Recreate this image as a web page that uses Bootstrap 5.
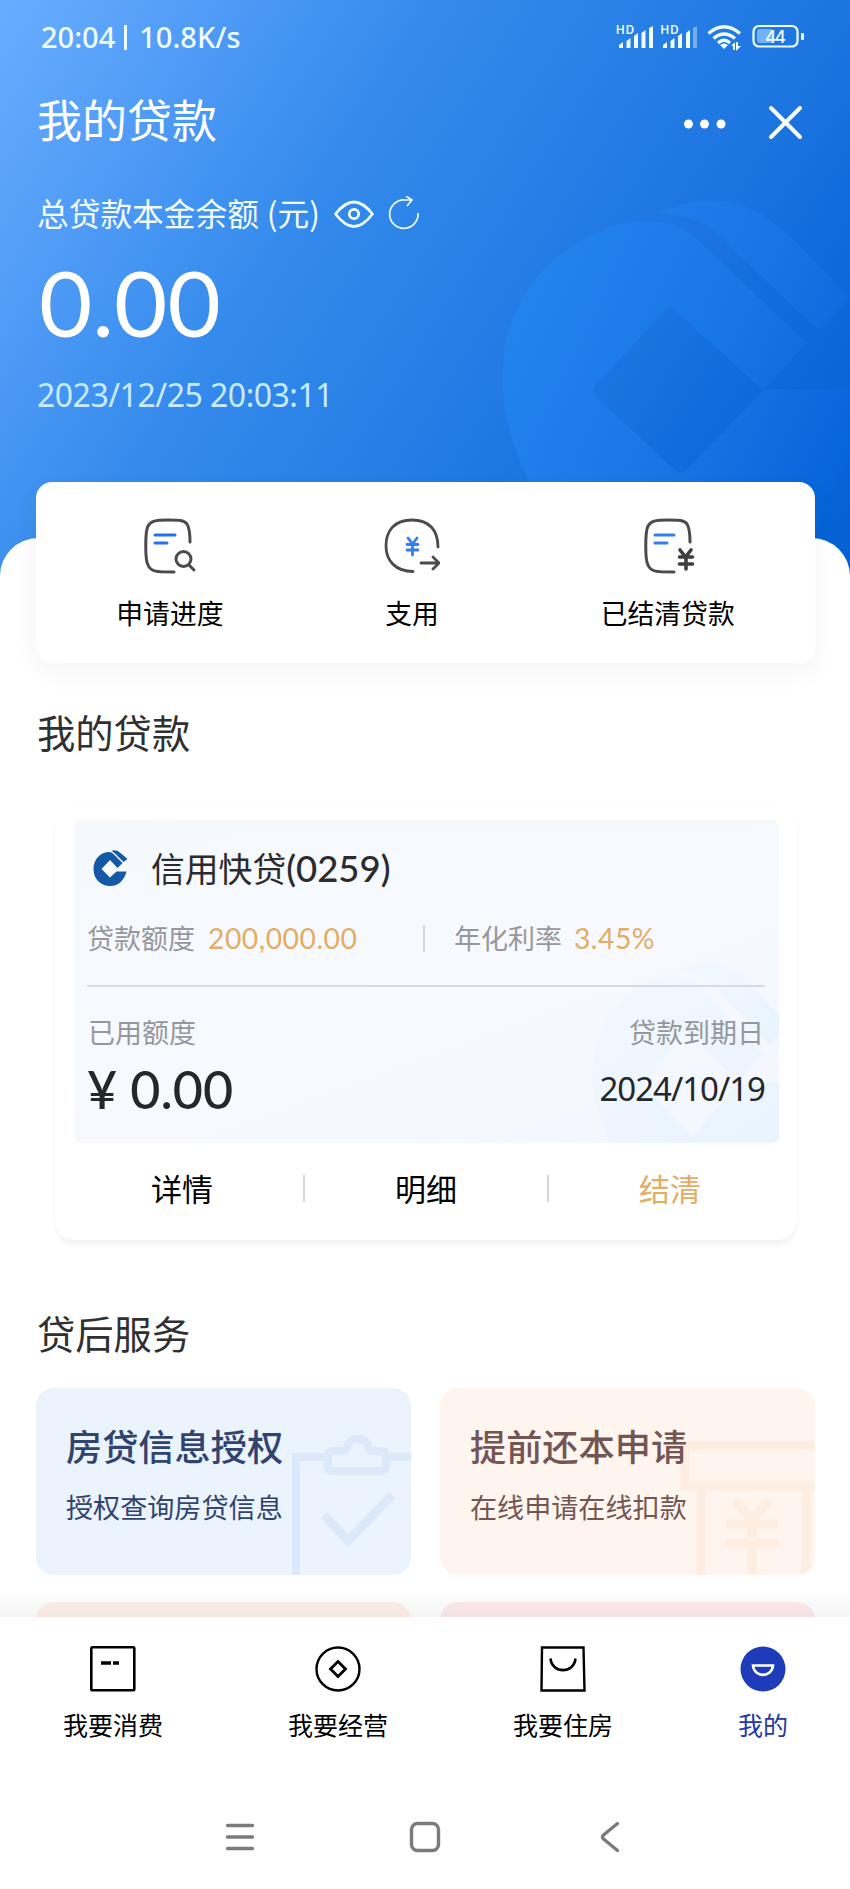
<!DOCTYPE html>
<html lang="zh-CN">
<head>
<meta charset="utf-8">
<meta name="viewport" content="width=device-width, initial-scale=1">
<title>我的贷款</title>
<link href="https://cdn.jsdelivr.net/npm/bootstrap@5.3.0/dist/css/bootstrap.min.css" rel="stylesheet">
<style>
body{margin:0;background:#fff;font-family:"Noto Sans CJK SC",sans-serif;color:#2b2b2d}
.screen{width:850px;height:1889px;overflow:hidden}
svg{display:block;flex:none}
.num{font-family:Lato,"Noto Sans CJK SC",sans-serif}
.dig{font-family:"Noto Sans","Noto Sans CJK SC",sans-serif}
.hero{height:598px;padding:0 36px 0 37px;background:linear-gradient(123deg,#68aeff 0%,#57a0f9 13%,#358bec 35%,#1c74e0 69%,#0c6ad9 82%,#0462d5 96%);color:#fff}
.hero>*{position:relative}
.hero .watermark{position:absolute;left:425px;top:180px}
.status{height:74px;padding:0 10px 0 4px;color:#eefcff}
.status-text{font-size:29px;font-weight:500}
.status-bar{width:3px;height:25px;background:#eefcff;margin:0 12px 0 9px}
.bar-title{height:94px;font-size:45px;padding-right:11px}
.bar-title span{padding-bottom:4px}
.bar-title svg{margin-top:3px}
.balance-label{height:92px;font-size:31.7px;color:#f2fbff}
.balance-label span{padding-bottom:2px}
.amount{height:90px;font-size:92px;line-height:84px;padding-left:2px}
.stamp{height:90px;font-size:32px;line-height:90px;color:#c9eaff;letter-spacing:-.5px}
.sheet{position:relative;margin-top:-60px;border-radius:38px 38px 0 0;background:#fff;padding:0 35px 0 36px}
.quick{height:181px;background:#fff;border-radius:16px;box-shadow:0 10px 28px rgba(0,0,0,.045);position:relative;top:-56px;margin-bottom:-57px;padding-top:36px;color:#000}
.quick-item{font-size:26.8px;line-height:40px}
.quick-item svg{margin-bottom:19px}
.sec{font-size:38.3px;line-height:50px;color:#303032;padding-left:1px}
.sec-loan{height:146px;padding-top:45px}
.sec-after{height:148px;padding-top:68px}
.loan{margin:0 18px 0 19px;height:432px;border-radius:20px;background:#fff;box-shadow:0 6px 4px rgba(0,0,0,.035),0 0 4px rgba(0,0,0,.02);padding:12px 18px 0 19px}
.loan-body{position:relative;height:323px;border-radius:7px;background:linear-gradient(160deg,#f5f9fe,#f7f9fe 50%,#f3f7fe);padding:0 14px 0 13px;overflow:hidden}
.loan-body>*{position:relative}
.loan-body .watermark{position:absolute;left:475px;top:130px}
.loan-name{height:96px;font-size:33.8px;padding-left:5px}
.loan-name span{margin-left:23px}
.loan-name .num{font-size:36.5px;font-weight:500}
.rate{height:44px;font-size:27px;color:#95979d}
.rate .num{font-size:28.3px;letter-spacing:.5px}
.gold{color:#e3ad65}
.vbar{width:1.5px;height:27px;background:#d6d8dc}
.rule{height:2px;background:#d8dbe1;margin-top:25px}
.used-label{height:46px;margin-top:22px;padding:0 1px;font-size:27px;color:#95979d}
.used{height:66px;margin-top:1px;color:#25272b}
.used-amt{font-size:52px;font-weight:500}
.due{font-size:33px;letter-spacing:-1px}
.loan-actions{height:91px;font-size:31px;color:#000;margin:0 -12px 0 -13px}
.loan-actions>span{width:242px;text-align:center}
.service{height:187px;border-radius:18px;position:relative;overflow:hidden;width:375px;padding:34px 0 0 30px}
.service svg{position:absolute;right:0;bottom:0}
.service-name{font-size:36.2px;line-height:46px;position:relative;font-weight:500}
.service-sub{font-size:27.1px;line-height:36px;margin-top:21px;position:relative}
.blue{background:#ebf3fd;color:#30446f}
.peach{background:#fef5ef;color:#755553}
.stub{height:60px;width:375px;border-radius:18px}
.main{height:1617px;overflow:hidden;position:relative}
.main::after{content:"";position:absolute;left:0;right:0;bottom:0;height:26px;background:linear-gradient(rgba(0,0,0,0),rgba(0,0,0,.04))}
.tabs{height:150px;padding:29px 62px 0 63px;color:#000;font-size:25px}
.tab{line-height:36px}
.tab svg{margin-bottom:14px}
.sys{height:122px;padding:18px 225px 0}
</style>
</head>
<body>
<div class="screen">
<main class="main">
  <header class="hero">
    <svg class="watermark" width="425" height="400" viewBox="0 0 425 400">
      <defs><linearGradient id="wm" gradientUnits="userSpaceOnUse" x1="77" y1="120" x2="425" y2="290"><stop offset="0" stop-color="#2384ef"/><stop offset=".5" stop-color="#1a78e6"/><stop offset="1" stop-color="#0664da"/></linearGradient></defs>
      <path fill="url(#wm)" d="M77 200C78 130 110 90 150 65C180 44 204 41 222 41C240 42 255 45 265 53L382 163L342 206Q337 210 332 205L250 130Q245 125 240 130L170 206Q166 212 171 217L251 291Q256 295 261 290L337 212Q339 209 344 209H425V275L400 320L380 400H170Q125 350 103 300Q78 245 77 200Z"/>
      <path fill="url(#wm)" d="M234 33C255 23 270 21 285 21C320 21 340 35 358 50L425 117L398 147Q394 151 390 147L288 50C270 37 255 36 234 33Z"/>
    </svg>
    <div class="status d-flex align-items-center justify-content-between">
      <div class="dig status-text d-flex align-items-center"><span>20:04</span><i class="status-bar"></i><span>10.8K/s</span></div>
      <svg width="188" height="28" viewBox="616 23 188 28" fill="#eefcff">
        <g font-family="Inter,sans-serif" font-weight="600" font-size="11.5"><text x="616" y="34" textLength="18">HD</text><text x="660.500" y="34" textLength="18">HD</text></g>
        <path d="M619 48v-3l4-3v6zM626.500 48v-7l4-3v10zM634 48V36l4-3v15zM641.500 48V33l4-3v18zM649 48V28l4-2v22zM663 48v-3l4-3v6zM670.500 48v-7l4-3v10zM678 48V36l4-3v15zM686 48V33l4-3v18z"/>
        <path opacity=".4" d="M693 48V28l4-2v22z"/>
        <g fill="none" stroke="#eefcff" stroke-width="3.300"><path d="M708.500 33.500Q724 20 740 33.500"/><path d="M713.500 38.500Q724 29.500 735 38.500"/><path d="M718 43Q724 37.500 730 43"/></g>
        <path d="M720 45Q724 42 728 45L724 49zM731 46l4-4v8h-2v-4zM736 42h2v4h3l-5 5z"/>
        <rect x="753.500" y="26" width="44" height="20.500" rx="5.500" fill="none" stroke="#eefcff" stroke-width="2.200"/>
        <path fill="#73b2f8" d="M757 32q0-3 3-3h12v14h-12q-3 0-3-3z"/>
        <rect x="801" y="33" width="3" height="7" rx="1"/>
        <text x="765" y="43" font-family="Inter,sans-serif" font-weight="500" font-size="17.500" textLength="21">44</text>
      </svg>
    </div>
    <div class="bar-title d-flex align-items-center justify-content-between">
      <span>我的贷款</span>
      <svg width="120" height="36" viewBox="683 105 120 36" fill="#fff"><circle cx="688.500" cy="124" r="4.500"/><circle cx="704.500" cy="124" r="4.500"/><circle cx="721" cy="124" r="4.500"/><path d="M771 108l29 29M800 108l-29 29" stroke="#fff" stroke-width="4" stroke-linecap="round"/></svg>
    </div>
    <div class="balance-label d-flex align-items-center">
      <span>总贷款本金余额</span><span class="ms-2">(元)</span>
      <svg width="88" height="36" viewBox="332 196 88 36" fill="none" stroke="#eefcff" style="margin-left:12px"><path d="M335.500 214Q345 202 354 202T372.500 214Q363 226.500 354 226.500T335.500 214Z" stroke-width="2.800" stroke-linejoin="round"/><circle cx="354" cy="214" r="4.700" stroke-width="2.800"/><path d="M418 213A14.200 14.200 0 1 1 405 200H412M406 196L412 200L407 206" stroke-width="1.700"/></svg>
    </div>
    <div class="amount num">0.00</div>
    <div class="stamp dig">2023/12/25 20:03:11</div>
  </header>

  <section class="sheet">
    <div class="quick d-flex justify-content-around">
      <div class="quick-item d-flex flex-column align-items-center">
        <svg width="56" height="56" viewBox="0 0 56 56" fill="none" stroke="#4b4b4d" stroke-width="3" stroke-linecap="round"><path d="M48 24C48 14 47 9 45 6C42 2 37 2 26 2C13 2 9 3 6 8C3 14 3 42 6 47C9 54 14 54 32 54"/><path d="M13 17H33M13 25H25" stroke="#2371ee"/><circle cx="41.500" cy="41" r="7.500"/><path d="M47 47l5 5"/></svg>
        <span>申请进度</span>
      </div>
      <div class="quick-item d-flex flex-column align-items-center">
        <svg width="56" height="56" viewBox="0 0 56 56" fill="none" stroke="#4b4b4d" stroke-width="2.800" stroke-linecap="round"><path d="M54 29C54 13 46 2 28 2S2 13 2 28S12 53.500 29 53.500"/><path d="M24 20l4.500 6l4.500-6M23 26.500H34M23 32H34M28.500 26V37" stroke="#347fee"/><path d="M37 45H54M49 39l6 6l-6 6"/></svg>
        <span>支用</span>
      </div>
      <div class="quick-item d-flex flex-column align-items-center">
        <svg width="56" height="56" viewBox="-1 0 56 56" fill="none" stroke="#4b4b4d" stroke-width="3" stroke-linecap="round"><path d="M49 24C49 14 48 9 46 6C43 2 38 2 27 2C14 2 10 3 7 8C4 14 4 42 7 47C10 54 15 54 33 54"/><path d="M14 17H33M14 25H26" stroke="#347fee"/><path d="M39 32l5.500 7l5.500-7M38.500 39H51.500M38.500 46H51.500M45 39V51" stroke="#3f3f41" stroke-width="3.600"/></svg>
        <span>已结清贷款</span>
      </div>
    </div>

    <div class="sec sec-loan">我的贷款</div>

    <div class="loan">
      <div class="loan-body">
        <svg class="watermark" width="238" height="229" viewBox="0 0 425 360" preserveAspectRatio="none" fill="url(#wm2)"><defs><linearGradient id="wm2" x1="0" y1="0" x2=".6" y2="1"><stop offset="0" stop-color="#f3f8fe"/><stop offset="1" stop-color="#e9f4fe"/></linearGradient></defs><path d="M77 200C78 130 110 90 150 65C180 44 204 41 222 41C240 42 255 45 265 53L382 163L337 208L245 127L168 211L256 295L337 209H425V360H145Q80 270 77 200Z"/><path d="M234 33C255 23 270 21 285 21C320 21 340 35 358 50L425 117L394 149L288 50C270 37 255 36 234 33Z"/></svg>
        <div class="loan-name d-flex align-items-center">
          <svg width="36" height="36" viewBox="-0.500 0 36 36"><path fill="#1459a8" d="M34 21.500C32 30 26 36 18 36C8 36 1 29 1 19C1 9 8 2 17 2Q19 2 21 4L30 13L25 18L17.500 10L9 19L17.500 27.500L24 21.500Z"/><path fill="#1459a8" d="M19 1Q24-1 28 3L35 9L31 12L23 4Q21 2 19 1Z"/></svg>
          <span>信用快贷<i class="num fst-normal">(0259)</i></span>
        </div>
        <div class="rate d-flex align-items-center">
          <span>贷款额度</span><span class="num gold" style="margin-left:13px">200,000.00</span>
          <i class="vbar" style="margin-left:66px"></i>
          <span style="margin-left:29px">年化利率</span><span class="num gold" style="margin-left:12px">3.45%</span>
        </div>
        <div class="rule"></div>
        <div class="used-label d-flex align-items-center justify-content-between"><span>已用额度</span><span>贷款到期日</span></div>
        <div class="used d-flex align-items-center justify-content-between"><span class="num used-amt">¥ 0.00</span><span class="dig due">2024/10/19</span></div>
      </div>
      <div class="loan-actions d-flex align-items-center justify-content-between">
        <span>详情</span><i class="vbar"></i><span>明细</span><i class="vbar"></i><span class="gold">结清</span>
      </div>
    </div>

    <div class="sec sec-after">贷后服务</div>

    <div class="d-flex justify-content-between">
      <div class="service blue">
        <svg width="119" height="140" viewBox="292 1435 119 140" fill="none" stroke="#dbe9fb" stroke-width="8"><path d="M296 1575V1457H326M390 1457H411"/><path d="M333 1451H345C348 1449 347 1439 358 1439S368 1449 371 1451H381Q386 1451 386 1456V1466Q386 1471 381 1471H333Q328 1471 328 1466V1456Q328 1451 333 1451Z"/><path d="M324 1515L348 1541L392 1495" stroke-width="9"/></svg>
        <div class="service-name">房贷信息授权</div>
        <div class="service-sub">授权查询房贷信息</div>
      </div>
      <div class="service peach">
        <svg width="136" height="140" viewBox="679 1435 136 140" fill="none" stroke="#fdeee1" stroke-width="9"><path d="M815 1445H685V1486H815M701 1486V1575M806 1486V1575"/><path d="M735 1500L752 1520L769 1500M726 1524H778M726 1543H778M752 1522V1575"/></svg>
        <div class="service-name">提前还本申请</div>
        <div class="service-sub">在线申请在线扣款</div>
      </div>
    </div>
    <div class="d-flex justify-content-between" style="margin-top:27px"><div class="stub" style="background:#fdf0e9"></div><div class="stub" style="background:#fdeaec"></div></div>
  </section>
</main>

<nav class="tabs d-flex justify-content-between align-items-start">
  <div class="tab d-flex flex-column align-items-center">
    <svg width="46" height="46" viewBox="0 0 46 46" fill="none" stroke="#000"><rect x="1.300" y="1.300" width="43" height="43" rx="1" stroke-width="2.600"/><path d="M11 17H21M23 17H29" stroke-width="3.400"/></svg><span>我要消费</span></div>
  <div class="tab d-flex flex-column align-items-center">
    <svg width="46" height="46" viewBox="0 0 46 46" fill="none" stroke="#000" stroke-width="2.400"><circle cx="23" cy="23" r="21.500"/><path d="M23 15.500L30.500 23L23 30.500L15.500 23Z" stroke-width="2.800"/></svg><span>我要经营</span></div>
  <div class="tab d-flex flex-column align-items-center">
    <svg width="46" height="46" viewBox="0 0 46 46" fill="none" stroke="#000" stroke-width="2.400"><path d="M2 1.500H43.500L44.500 44.500H1.500Z"/><path d="M10.500 12.500C12 28 34 28 35.500 12.500" stroke-width="2.600"/></svg><span>我要住房</span></div>
  <div class="tab d-flex flex-column align-items-center" style="color:#2338a8">
    <svg width="46" height="46" viewBox="0 0 46 46"><circle cx="23" cy="23" r="22.500" fill="#1e3cba"/><path d="M13 19.500H33C32 32 14 32 13 19.500Z" fill="none" stroke="#fff" stroke-width="2.600"/></svg><span>我的</span></div>
</nav>
<div class="sys d-flex justify-content-between align-items-center">
  <svg width="30" height="30" viewBox="0 0 30 30" stroke="#7b7b7b" stroke-width="3.400" stroke-linecap="round"><path d="M2.500 3.500H27.500M2.500 15H27.500M2.500 26.500H27.500"/></svg>
  <svg width="32" height="32" viewBox="0 0 32 32" fill="none" stroke="#7b7b7b" stroke-width="3.400"><rect x="2.500" y="2.500" width="27" height="27" rx="6"/></svg>
  <svg width="30" height="32" viewBox="-5 0 30 32" fill="none" stroke="#7b7b7b" stroke-width="3.400" stroke-linecap="round" stroke-linejoin="round"><path d="M17.500 2.500L3.500 14Q1.500 16 3.500 18L17.500 29.500"/></svg>
</div>
</div>
<script src="https://cdn.jsdelivr.net/npm/bootstrap@5.3.0/dist/js/bootstrap.bundle.min.js"></script>
</body>
</html>
